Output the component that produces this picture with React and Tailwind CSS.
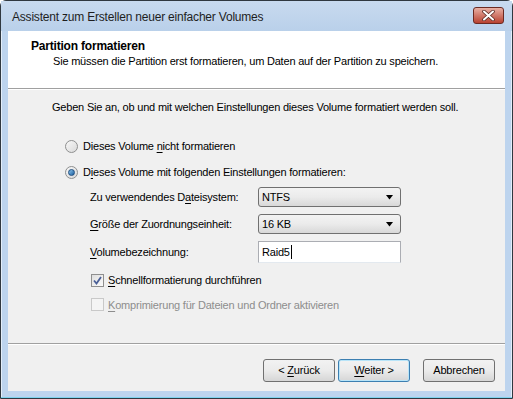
import React from "react";

const font = { fontFamily: '"Liberation Sans", Arial, sans-serif' };

function U({ children }) {
  return <span className="underline underline-offset-2">{children}</span>;
}

function Radio({ checked }) {
  return (
    <span className="relative flex h-[13px] w-[13px] shrink-0 items-center justify-center rounded-full border border-[#8e8f8f] bg-gradient-to-br from-[#f8f8f8] to-[#d9d9d9]">
      {checked && (
        <span className="h-[7px] w-[7px] rounded-full border border-[#1f4e80] bg-gradient-to-br from-[#8cc4ec] to-[#17609f]" />
      )}
    </span>
  );
}

function Check({ checked, disabled }) {
  return (
    <span
      className={
        "flex h-[13px] w-[13px] shrink-0 items-center justify-center border " +
        (disabled
          ? "border-[#c9c9c9] bg-[#f4f4f4]"
          : "border-[#8f8f8f] bg-gradient-to-br from-[#dedede] to-[#fbfbfb]")
      }
    >
      {checked && (
        <svg width="9" height="9" viewBox="0 0 9 9">
          <path d="M1 4.5 L3.5 7.5 L8 1" fill="none" stroke="#4a5f97" strokeWidth="1.8" />
        </svg>
      )}
    </span>
  );
}

function Select({ value }) {
  return (
    <div className="flex h-[20px] w-[143px] items-center justify-between rounded-[3px] border border-[#707070] bg-gradient-to-b from-[#f3f3f3] via-[#ebebeb] to-[#d8d8d8] pl-[3px] pr-[6px]">
      <span>{value}</span>
      <svg width="8" height="5" viewBox="0 0 8 5">
        <path d="M0 0 H7 L3.5 4.5 Z" fill="#000" />
      </svg>
    </div>
  );
}

function Btn({ children, focused }) {
  return (
    <button
      className={
        "flex h-[23px] w-[72px] items-center justify-center rounded-[3px] border bg-gradient-to-b from-[#f2f2f2] via-[#ebebeb] to-[#d6d6d6] " +
        (focused ? "border-[#3c7fb1] shadow-[inset_0_0_0_1px_#b8e4f8]" : "border-[#707070]")
      }
    >
      <span className="whitespace-pre">{children}</span>
    </button>
  );
}

export default function App() {
  return (
    <div className="h-[399px] w-[513px] bg-white text-[11px] tracking-[-0.2px] text-black" style={font}>
      <div className="flex h-[399px] w-[513px] flex-col rounded-t-[6px] border border-[#303840] bg-[#bdd4ee] shadow-[inset_0_0_0_1px_#e3eefa]">
        {/* title bar */}
        <div className="flex h-[30px] shrink-0 items-center justify-between bg-gradient-to-b from-[#c8daef] to-[#b9d0ea] pl-[11px] pr-[8px]">
          <span className="mt-[1px] text-[12px] tracking-[-0.2px] text-[#1e1e1e]">Assistent zum Erstellen neuer einfacher Volumes</span>
          <div className="mt-[-2px] flex h-[17px] w-[31px] items-center justify-center rounded-[3px] border border-[#6b2a22] bg-gradient-to-b from-[#e8b0a4] via-[#d0786a] to-[#b8402f]">
            <svg width="13" height="11" viewBox="0 0 13 11">
              <path d="M2 1.5 L11 9.5 M11 1.5 L2 9.5" stroke="#5a2a24" strokeWidth="3.6" strokeLinecap="round" />
              <path d="M2 1.5 L11 9.5 M11 1.5 L2 9.5" stroke="#fff" strokeWidth="2" strokeLinecap="round" />
            </svg>
          </div>
        </div>

        {/* client */}
        <div className="ml-[7px] mr-[7px] flex flex-1 flex-col bg-[#f0f0f0]">
          <div className="h-[57px] shrink-0 bg-white pl-[23px] pt-[8px]">
            <div className="text-[12px] font-bold leading-[15px] tracking-[-0.2px]">Partition formatieren</div>
            <div className="pl-[22px] leading-[15px]">
              Sie müssen die Partition erst formatieren, um Daten auf der Partition zu speichern.
            </div>
          </div>
          <div className="h-px shrink-0 bg-[#a0a0a0]" />
          <div className="h-px shrink-0 bg-white" />

          <div className="flex h-[253px] shrink-0 flex-col pl-[44px] pt-[10px]">
            <div className="whitespace-nowrap leading-[15px]">
              Geben Sie an, ob und mit welchen Einstellungen dieses Volume formatiert werden soll.
            </div>
            <div className="mt-[24px] flex h-[15px] items-center gap-[5px] pl-[13px]">
              <Radio />
              <span>Dieses Volume <U>n</U>icht formatieren</span>
            </div>
            <div className="mt-[11px] flex h-[15px] items-center gap-[5px] pl-[13px]">
              <Radio checked />
              <span>D<U>i</U>eses Volume mit folgenden Einstellungen formatieren:</span>
            </div>
            <div className="mt-[7px] flex flex-col gap-[7px] pl-[38px]">
              <div className="flex items-center">
                <span className="w-[168px] whitespace-nowrap">Zu verwendendes D<U>a</U>teisystem:</span>
                <Select value="NTFS" />
              </div>
              <div className="flex items-center">
                <span className="w-[168px] whitespace-nowrap"><U>G</U>röße der Zuordnungseinheit:</span>
                <Select value="16 KB" />
              </div>
              <div className="flex items-center">
                <span className="w-[168px] whitespace-nowrap"><U>V</U>olumebezeichnung:</span>
                <div className="flex h-[22px] w-[143px] items-center border border-[#abadb3] border-b-[#e3e9ef] bg-white pl-[3px]">
                  Raid5<span className="ml-px inline-block h-[14px] w-px bg-black" />
                </div>
              </div>
            </div>
            <div className="mt-[9px] flex flex-col gap-[8px] pl-[39px]">
              <div className="flex items-center gap-[4px]">
                <Check checked />
                <span><U>S</U>chnellformatierung durchführen</span>
              </div>
              <div className="flex items-center gap-[4px] text-[#8d8d8d]">
                <Check disabled />
                <span><U>K</U>omprimierung für Dateien und Ordner aktivieren</span>
              </div>
            </div>
          </div>

          <div className="h-px shrink-0 bg-[#a0a0a0]" />
          <div className="h-px shrink-0 bg-white" />
          <div className="flex flex-1 items-start justify-end pr-[10px] pt-[14px]">
            <div className="flex gap-[3px]">
              <Btn>&lt; <U>Z</U>urück</Btn>
              <Btn focused><U>W</U>eiter &gt;</Btn>
            </div>
            <div className="ml-[13px]">
              <Btn>Abbrechen</Btn>
            </div>
          </div>
        </div>
        <div className="h-[7px] shrink-0 border-b border-[#7fd3ee]" />
      </div>
    </div>
  );
}
